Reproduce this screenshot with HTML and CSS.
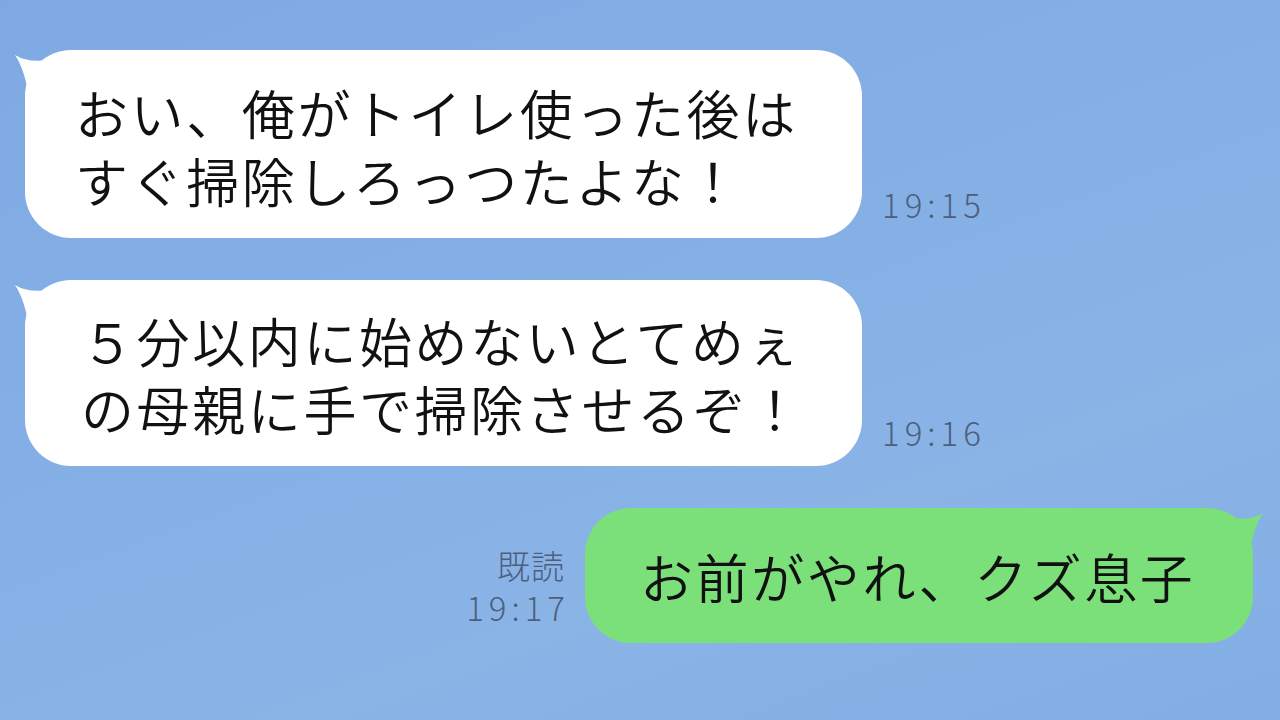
FILE: index.html
```html
<!DOCTYPE html>
<html lang="ja">
<head>
  <meta charset="UTF-8">
  <meta name="viewport" content="width=device-width, initial-scale=1.0">
  <title>トーク</title>
  <link rel="stylesheet" href="styles.css">
</head>
<body>
  <div class="chat">
    <div class="row incoming">
      <div class="bubble white first">
        <svg class="tail tail-left" width="44" height="50" viewBox="0 0 44 50">
          <path d="M0 5 Q14 14 40 9 L40 48 L14 48 Q10 20 0 5 Z" fill="#ffffff"/>
        </svg>
        <p>おい、俺がトイレ使った後は<br>すぐ掃除しろっつたよな！</p>
      </div>
      <div class="meta">
        <span class="time">19:15</span>
      </div>
    </div>

    <div class="row incoming">
      <div class="bubble white second">
        <svg class="tail tail-left" width="44" height="50" viewBox="0 0 44 50">
          <path d="M0 5 Q14 14 40 9 L40 48 L14 48 Q10 20 0 5 Z" fill="#ffffff"/>
        </svg>
        <p><span class="num">５</span>分以内に始めないとてめぇ<br>の母親に手で掃除させるぞ！</p>
      </div>
      <div class="meta">
        <span class="time">19:16</span>
      </div>
    </div>

    <div class="row outgoing">
      <div class="meta">
        <span class="read">既読</span>
        <span class="time">19:17</span>
      </div>
      <div class="bubble green">
        <svg class="tail tail-right" width="44" height="50" viewBox="0 0 44 50">
          <path d="M44 5 Q30 14 4 9 L4 48 L30 48 Q34 20 44 5 Z" fill="#7ce07a"/>
        </svg>
        <p>お前がやれ、クズ息子</p>
      </div>
    </div>
  </div>
</body>
</html>
```

FILE: styles.css
```css
body {
  margin: 0;
  width: 1280px;
  height: 720px;
  overflow: hidden;
  background: linear-gradient(160deg, #7ea9e3 0%, #85b0e6 45%, #8ab4e6 70%, #82ade4 100%);
  font-family: "Noto Sans CJK JP", "Noto Sans", sans-serif;
  color: #111111;
}

.chat {
  display: flex;
  flex-direction: column;
  gap: 42px;
  padding-top: 50px;
}

.row {
  display: flex;
  align-items: flex-end;
}

.row.incoming {
  padding-left: 25px;
}

.row.outgoing {
  justify-content: flex-end;
  padding-right: 27px;
}

.bubble {
  position: relative;
  border-radius: 46px;
}

.bubble p {
  margin: 0;
  font-size: 53px;
  font-weight: 350;
  line-height: 68px;
  letter-spacing: 2.6px;
  white-space: nowrap;
}

.white {
  background: #ffffff;
  width: 837px;
  box-sizing: border-box;
}

.first {
  padding: 28px 0 24px 50px;
}

.second {
  padding: 26px 0 24px 56px;
}

.green {
  background: #7ce07a;
  width: 668px;
  box-sizing: border-box;
  padding: 34px 0 33px 55px;
}

.tail {
  position: absolute;
  top: 0;
}

.tail-left {
  left: -10px;
}

.tail-right {
  right: -10px;
}

.meta {
  display: flex;
  flex-direction: column;
  align-items: flex-end;
  font-weight: 300;
  color: #4e5f7d;
}

.incoming .meta {
  margin-left: 20px;
  padding-bottom: 14px;
}

.outgoing .meta {
  margin-right: 20px;
  padding-bottom: 16px;
}

.time {
  font-size: 33px;
  letter-spacing: 5px;
  line-height: 40px;
  margin-right: -5px;
}

.read {
  font-size: 33px;
  line-height: 44px;
  letter-spacing: 1px;
}
```
